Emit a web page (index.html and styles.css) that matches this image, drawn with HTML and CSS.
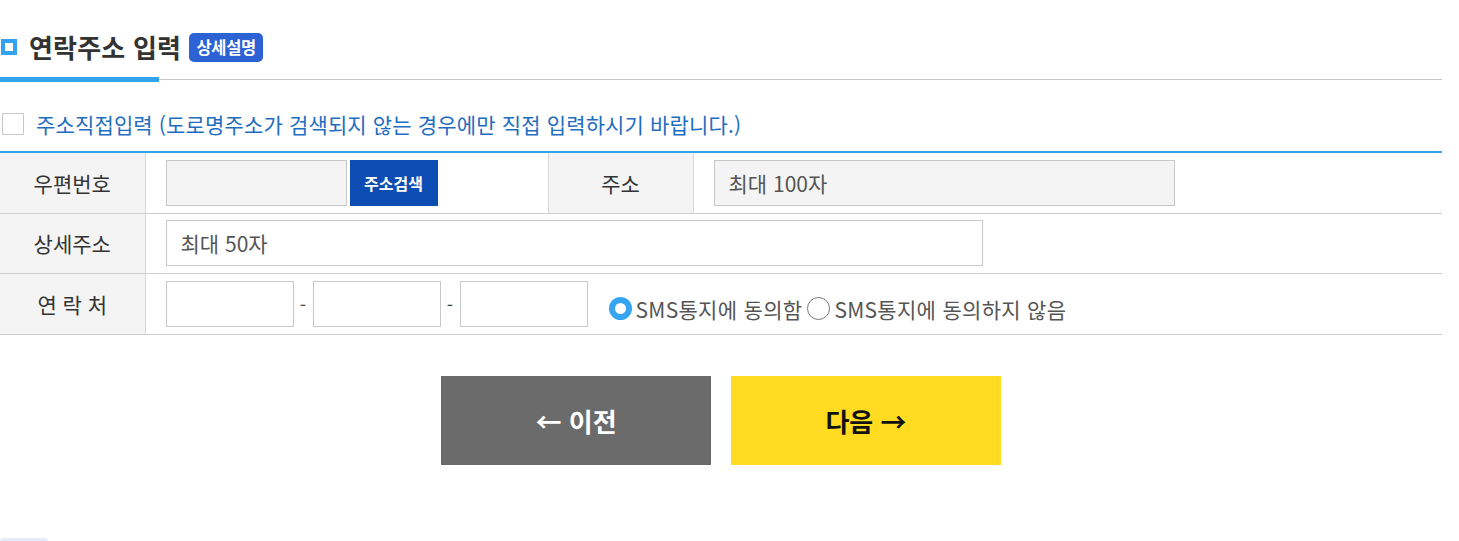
FILE: index.html
```html
<!DOCTYPE html>
<html lang="ko">
<head>
<meta charset="utf-8">
<link rel="stylesheet" href="styles.css">
</head>
<body>
<div class="page">
  <div class="title">
    <span class="title-icon"></span>
    <h2 class="title-text">연락주소 입력</h2>
    <span class="badge">상세설명</span>
  </div>
  <div class="title-line"><span class="bar"></span><span class="rule"></span></div>

  <label class="direct">
    <span class="checkbox"></span>
    <span class="direct-text">주소직접입력 (도로명주소가 검색되지 않는 경우에만 직접 입력하시기 바랍니다.)</span>
  </label>

  <table class="form">
    <colgroup>
      <col class="c-th"><col class="c-td1"><col class="c-th"><col>
    </colgroup>
    <tr class="r1">
      <th>우편번호</th>
      <td>
        <div class="cell">
          <input class="inp zip" type="text" readonly>
          <button class="search" type="button">주소검색</button>
        </div>
      </td>
      <th class="mid">주소</th>
      <td><div class="cell"><input class="inp addr" type="text" placeholder="최대 100자" readonly></div></td>
    </tr>
    <tr class="r2">
      <th>상세주소</th>
      <td colspan="3"><div class="cell"><input class="inp detail" type="text" placeholder="최대 50자"></div></td>
    </tr>
    <tr class="r3">
      <th>연 락 처</th>
      <td colspan="3">
        <div class="cell">
          <input class="inp tel" type="text"><span class="dash">-</span><input class="inp tel" type="text"><span class="dash">-</span><input class="inp tel" type="text">
          <div class="radios">
            <label class="radio"><span class="dot on"></span>SMS통지에 동의함</label>
            <label class="radio"><span class="dot"></span>SMS통지에 동의하지 않음</label>
          </div>
        </div>
      </td>
    </tr>
  </table>

  <div class="actions">
    <button class="btn prev" type="button">← 이전</button>
    <button class="btn next" type="button">다음 →</button>
  </div>

  <div class="foot-tab"></div>
</div>
</body>
</html>
```

FILE: styles.css
```css
* { box-sizing: border-box; }
html, body { margin: 0; padding: 0; background: #fff; }
body {
  font-family: "Noto Sans CJK KR", "Noto Sans", sans-serif;
  color: #333;
  overflow: hidden;
}
.page {
  width: 1442px;
  padding-top: 30px;
}
.title {
  display: flex;
  align-items: center;
  height: 34px;
}
.title-icon {
  width: 16px;
  height: 16px;
  margin-left: 1px;
  border: 4px solid #33a3f0;
  background: #fff;
}
.title-text {
  margin: 0 0 0 12px;
  font-size: 26px;
  font-weight: 700;
  line-height: 34px;
  color: #333;
  letter-spacing: 0.2px;
}
.badge {
  margin-left: 8px;
  width: 74px;
  height: 29px;
  border-radius: 5px;
  background: #2d62d4;
  color: #fff;
  font-size: 16.5px;
  font-weight: 700;
  display: flex;
  align-items: center;
  justify-content: center;
  letter-spacing: -0.3px;
}
.title-line {
  display: flex;
  align-items: center;
  margin-top: 13px;
  height: 5px;
}
.bar { width: 159px; height: 5px; background: #33a3f0; }
.rule { flex: 1; height: 1px; background: #c8c8c8; }

.direct {
  display: flex;
  align-items: center;
  margin-top: 30px;
  height: 24px;
}
.checkbox {
  width: 22px;
  height: 22px;
  margin-left: 2px;
  border: 1px solid #c8c8c8;
  background: #fff;
}
.direct-text {
  margin-left: 12px;
  font-size: 21px;
  color: #1f6dc0;
  letter-spacing: 0.15px;
}

.form {
  margin-top: 15px;
  width: 1442px;
  border-collapse: collapse;
  border-top: 2px solid #33a3f0;
  table-layout: fixed;
}
.c-th { width: 145px; }
.c-td1 { width: 403px; }
.form th, .form td {
  height: 61px;
  padding: 0;
  border-bottom: 1px solid #cfcfcf;
}
.form .r2 th, .form .r2 td { height: 60px; }
.form th {
  background: #f4f4f4;
  font-weight: 400;
  font-size: 21px;
  color: #333;
  border-right: 1px solid #d8d8d8;
  text-align: center;
}
.form th.mid { border-left: 1px solid #d8d8d8; }
.cell {
  display: flex;
  align-items: center;
  padding-left: 20px;
}
.inp {
  height: 46px;
  border: 1px solid #c8c8c8;
  background: #fff;
  font-family: inherit;
  font-size: 21px;
  color: #333;
  padding: 0 14px;
  outline: none;
}
.inp::placeholder { color: #555; }
.zip { width: 181px; background: #f4f4f4; }
.addr { width: 461px; background: #f4f4f4; }
.detail { width: 817px; }
.tel { width: 128px; }
.dash { width: 19px; text-align: center; font-size: 18px; color: #444; }
.search {
  margin-left: 3px;
  width: 88px;
  height: 46px;
  border: 0;
  background: #0d4db3;
  color: #fff;
  font-family: inherit;
  font-size: 16px;
  font-weight: 700;
  padding: 0;
}
.radios {
  display: flex;
  align-items: center;
  margin-left: 21px;
  margin-top: 10px;
}
.radio {
  display: flex;
  align-items: center;
  font-size: 21px;
  color: #555;
  letter-spacing: 0.3px;
  margin-right: 5px;
}
.dot {
  width: 23px;
  height: 23px;
  border-radius: 50%;
  border: 1px solid #777;
  background: #fff;
  margin-right: 4px;
}
.dot.on { border: 6px solid #35a4f1; }

.actions {
  display: flex;
  justify-content: center;
  gap: 20px;
  margin-top: 41px;
}
.btn {
  width: 270px;
  height: 89px;
  border: 0;
  font-family: inherit;
  font-size: 26px;
  font-weight: 700;
  padding: 0;
}
.prev { background: #6b6b6b; color: #fff; }
.next { background: #ffdc22; color: #111; }
.foot-tab {
  margin-top: 73px;
  width: 48px;
  height: 10px;
  border-radius: 4px;
  background: #e2ebf8;
}
```
